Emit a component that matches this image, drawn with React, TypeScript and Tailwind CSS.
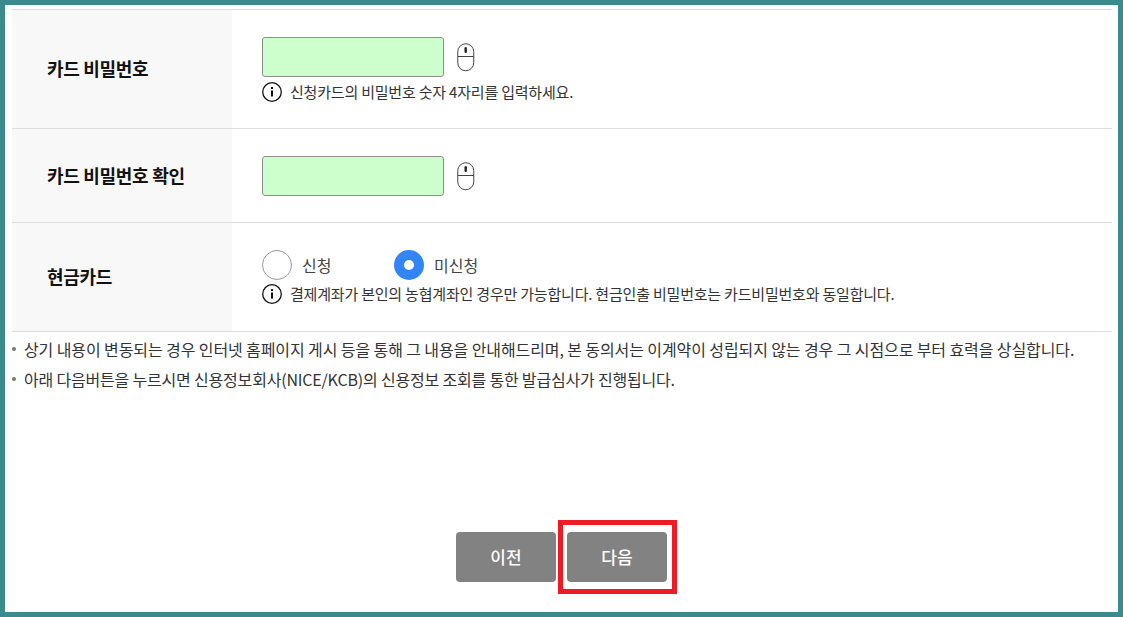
import React from 'react';

const font = { fontFamily: '"Noto Sans CJK KR", "Noto Sans", sans-serif' };

const MouseIcon = () => (
  <svg width="18" height="29" viewBox="0 0 18 29" className="shrink-0" fill="none">
    <rect x="0.75" y="0.75" width="16" height="27" rx="8" stroke="#444" strokeWidth="1" />
    <line x1="1" y1="13.5" x2="17" y2="13.5" stroke="#444" strokeWidth="1" />
    <rect x="7.5" y="4" width="2.4" height="6" rx="1.2" fill="#222" />
  </svg>
);

const InfoIcon = () => (
  <svg width="20" height="20" viewBox="0 0 20 20" className="shrink-0" fill="none">
    <circle cx="10" cy="10" r="9.3" stroke="#111" strokeWidth="1.3" />
    <rect x="9" y="8.5" width="2" height="6" fill="#111" />
    <rect x="9" y="5" width="2" height="2" fill="#111" />
  </svg>
);

const Help = ({ children }: { children: React.ReactNode }) => (
  <div className="flex items-center gap-[8px] h-[20px] text-[15px] text-[#333] tracking-[-0.2px]">
    <InfoIcon />
    <span>{children}</span>
  </div>
);

const PasswordField = () => (
  <div className="flex items-center gap-[13px]">
    <div className="w-[182px] h-[40px] bg-[#ccffcc] border border-[#8e8e8e] rounded-[3px]" />
    <MouseIcon />
  </div>
);

const Row = ({ label, className, labelClass, children }: { label: string; className: string; labelClass?: string; children: React.ReactNode }) => (
  <div className={`flex border-b border-[#dddddd] ${className}`}>
    <div className={`w-[220px] shrink-0 bg-[#f8f8f8] pl-[35px] flex items-center text-[18px] font-bold text-[#111] tracking-[-0.3px] ${labelClass ?? ''}`}>
      {label}
    </div>
    <div className="flex-1 pl-[30px]">{children}</div>
  </div>
);

export default function App() {
  return (
    <div className="w-[1123px] h-[617px] border-[5px] border-[#3b8a8c] bg-white overflow-hidden flex flex-col pl-[7px] pr-[6px] pt-[4px]" style={font}>
      <div className="border-t border-[#dddddd]">
        <Row label="카드 비밀번호" className="h-[119px]" labelClass="pb-[2px]">
          <div className="pt-[27px] flex flex-col gap-[5px]">
            <PasswordField />
            <Help>신청카드의 비밀번호 숫자 4자리를 입력하세요.</Help>
          </div>
        </Row>
        <Row label="카드 비밀번호 확인" className="h-[94px]">
          <div className="pt-[27px]">
            <PasswordField />
          </div>
        </Row>
        <Row label="현금카드" className="h-[109px]" labelClass="pb-[2px]">
          <div className="pt-[27px] flex flex-col gap-[4px]">
            <div className="flex items-center h-[30px] text-[16px] text-[#444]">
              <span className="w-[30px] h-[30px] rounded-full border border-[#999] bg-white" />
              <span className="ml-[10px] w-[92px]">신청</span>
              <span className="w-[30px] h-[30px] rounded-full bg-[#3385f5] flex items-center justify-center">
                <span className="w-[10px] h-[10px] rounded-full bg-white" />
              </span>
              <span className="ml-[10px]">미신청</span>
            </div>
            <Help>결제계좌가 본인의 농협계좌인 경우만 가능합니다. 현금인출 비밀번호는 카드비밀번호와 동일합니다.</Help>
          </div>
        </Row>
      </div>

      <ul className="pt-[2px] text-[16px] text-[#333]">
        <li className="flex items-center h-[30px] tracking-[-0.1px]">
          <span className="w-[4px] h-[4px] rounded-full bg-[#777] mr-[8px] shrink-0" />
          상기 내용이 변동되는 경우 인터넷 홈페이지 게시 등을 통해 그 내용을 안내해드리며, 본 동의서는 이계약이 성립되지 않는 경우 그 시점으로 부터 효력을 상실합니다.
        </li>
        <li className="flex items-center h-[30px] tracking-[-0.19px]">
          <span className="w-[4px] h-[4px] rounded-full bg-[#777] mr-[8px] shrink-0" />
          아래 다음버튼을 누르시면 신용정보회사(NICE/KCB)의 신용정보 조회를 통한 발급심사가 진행됩니다.
        </li>
      </ul>

      <div className="mt-[138px] flex justify-center gap-[11px] pr-[1px]">
        <button className="w-[100px] h-[50px] rounded-[4px] bg-[#828282] text-white text-[17px] font-medium">이전</button>
        <div className="relative">
          <button className="w-[100px] h-[50px] rounded-[4px] bg-[#828282] text-white text-[17px] font-medium">다음</button>
          <div className="absolute left-[-9px] top-[-12px] w-[119px] h-[74px] border-[5px] border-[#ed1c24]" />
        </div>
      </div>
    </div>
  );
}
